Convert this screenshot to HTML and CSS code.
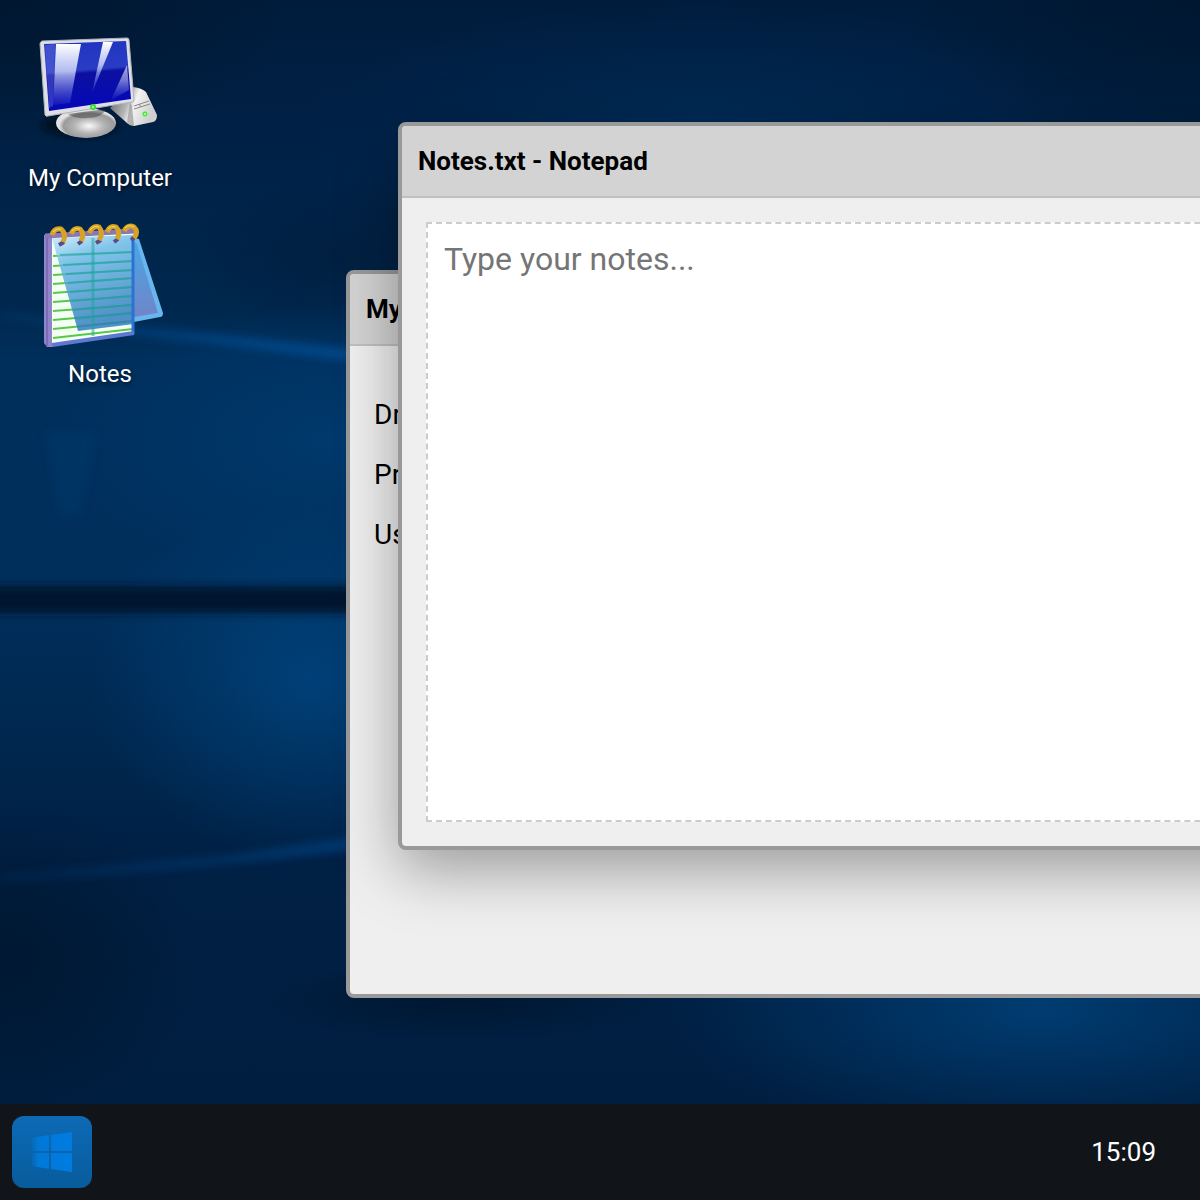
FILE: index.html
```html
<!DOCTYPE html>
<html lang="en">
<head>
    <meta charset="UTF-8">
    <meta name="viewport" content="width=device-width, initial-scale=1.0">
    <title>Desktop</title>
    <link rel="stylesheet" href="styles.css">
</head>
<body>
    <!-- Wallpaper -->
    <svg class="wallpaper" viewBox="0 0 1200 1200" preserveAspectRatio="none" aria-hidden="true">
        <defs>
            <linearGradient id="sky" x1="0" y1="0" x2="0" y2="1">
                <stop offset="0" stop-color="#001c3c"/>
                <stop offset="0.12" stop-color="#002146"/>
                <stop offset="0.26" stop-color="#00284f"/>
                <stop offset="0.3" stop-color="#002f5c"/>
                <stop offset="0.5" stop-color="#002f5c"/>
                <stop offset="0.6" stop-color="#002850"/>
                <stop offset="0.72" stop-color="#002044"/>
                <stop offset="1" stop-color="#001d3e"/>
            </linearGradient>
            <radialGradient id="glow">
                <stop offset="0" stop-color="#004a88" stop-opacity="0.85"/>
                <stop offset="1" stop-color="#004a88" stop-opacity="0"/>
            </radialGradient>
            <radialGradient id="dark">
                <stop offset="0" stop-color="#00142a" stop-opacity="0.7"/>
                <stop offset="1" stop-color="#00142a" stop-opacity="0"/>
            </radialGradient>
            <linearGradient id="beam" gradientUnits="userSpaceOnUse" x1="0" y1="0" x2="350" y2="0">
                <stop offset="0" stop-color="#01509a" stop-opacity="0.2"/>
                <stop offset="1" stop-color="#01509a" stop-opacity="0.8"/>
            </linearGradient>
            <filter id="soft" x="-20%" y="-50%" width="140%" height="200%"><feGaussianBlur stdDeviation="4"/></filter>
        </defs>
        <rect width="1200" height="1200" fill="url(#sky)"/>
        <ellipse cx="0" cy="0" rx="300" ry="160" fill="url(#dark)"/>
        <ellipse cx="1200" cy="0" rx="300" ry="160" fill="url(#dark)"/>
        <ellipse cx="0" cy="960" rx="200" ry="160" fill="url(#dark)"/>
        <ellipse cx="460" cy="1000" rx="200" ry="40" fill="url(#dark)"/>
        <ellipse cx="340" cy="260" rx="160" ry="80" fill="url(#dark)" opacity="0.5"/>
        <ellipse cx="700" cy="130" rx="400" ry="130" fill="url(#glow)" opacity="0.3"/>
        <ellipse cx="340" cy="440" rx="280" ry="140" fill="url(#glow)" opacity="0.45"/>
        <ellipse cx="310" cy="680" rx="220" ry="180" fill="url(#glow)" opacity="0.8"/>
        <ellipse cx="1040" cy="1010" rx="380" ry="130" fill="url(#glow)" opacity="0.8"/>
        <path d="M0 312 L150 328 L250 338 L350 350 L350 360 L230 346 L120 334 L0 318z" fill="url(#beam)" filter="url(#soft)"/>
        <path d="M0 882 L120 874 L270 860 L350 850 L350 838 L220 856 L0 874z" fill="url(#beam)" filter="url(#soft)" opacity="0.6"/>
        <path d="M46 432 H96 L80 514 H60z" fill="#003c6e" filter="url(#soft)" opacity="0.4"/>
        <rect x="-20" y="586" width="1240" height="27" fill="#00142e" filter="url(#soft)"/>
    </svg>

    <main class="desktop">
        <!-- Desktop icons -->
        <div class="icons">
            <button class="icon" type="button">
                <svg viewBox="0 0 128 128" aria-hidden="true">
                    <defs>
                        <linearGradient id="screen" x1="0" y1="0" x2="0.1" y2="1">
                            <stop offset="0" stop-color="#2034c0"/>
                            <stop offset="0.45" stop-color="#2a3cc4"/>
                            <stop offset="0.5" stop-color="#0c10a0"/>
                            <stop offset="1" stop-color="#0508b8"/>
                        </linearGradient>
                        <linearGradient id="shine" x1="0" y1="0" x2="0" y2="1">
                            <stop offset="0" stop-color="#fff"/>
                            <stop offset="0.45" stop-color="#e0e6ff" stop-opacity="0.75"/>
                            <stop offset="1" stop-color="#8090ff" stop-opacity="0.1"/>
                        </linearGradient>
                        <radialGradient id="stand" cx="0.55" cy="0.6">
                            <stop offset="0" stop-color="#fafafa"/>
                            <stop offset="0.5" stop-color="#b4b4b4"/>
                            <stop offset="0.85" stop-color="#9a9a9a"/>
                            <stop offset="1" stop-color="#e2e2e2"/>
                        </radialGradient>
                        <linearGradient id="tower" x1="0" y1="0" x2="1" y2="0.3">
                            <stop offset="0" stop-color="#5c5c5c"/>
                            <stop offset="0.45" stop-color="#b5b5b5"/>
                            <stop offset="0.6" stop-color="#f2f2f2"/>
                            <stop offset="1" stop-color="#cfcfcf"/>
                        </linearGradient>
                        <filter id="shade" x="-30%" y="-50%" width="160%" height="200%"><feGaussianBlur stdDeviation="3"/></filter>
                    </defs>
                    <ellipse cx="44" cy="101" rx="38" ry="12" fill="#000a18" opacity="0.7" filter="url(#shade)"/>
                    <path d="M74 84 L97 63 Q106 64 110 68 L121 91 Q121 97 117 98 L98 102 Q94 102 91 99z" fill="url(#tower)"/>
                    <path d="M94 78 L91 98 Q94 102 98 102 L96 82z" fill="#8b8b8b" opacity="0.6"/>
                    <path d="M98 82 L113 77 M98 85 L114 80 M103 80 L105 83" fill="none" stroke="#888" stroke-width="1"/>
                    <circle cx="109" cy="90" r="3" fill="#a8f7a0"/>
                    <circle cx="109" cy="90" r="2" fill="none" stroke="#2be02b" stroke-width="1"/>
                    <ellipse cx="50" cy="99" rx="30" ry="15" fill="url(#stand)"/>
                    <path d="M32 90 L70 85 Q66 94 52 94 Q38 95 32 90z" fill="#333" opacity="0.45"/>
                    <path d="M6 17 L91 14 Q93 14 93 16 L98 76 Q98 78 96 78 L12 92 Q10 93 9 91 L4 20 Q4 18 6 17z" fill="#dedfe6" stroke="#aeb0bb" stroke-width="1"/>
                    <path d="M8 20 L90 17 L95 75 L13 87z" fill="url(#screen)"/>
                    <path d="M9 21 L19 20 L17 82 L13 84z" fill="#6b78e0" opacity="0.4"/>
                    <path d="M20 20 H45 L34 79 L17 81z" fill="url(#shine)"/>
                    <path d="M67 18 H77 L56 69z" fill="url(#shine)"/>
                    <path d="M91 41 L93 66 L75 76z" fill="url(#shine)" opacity="0.65"/>
                    <circle cx="57" cy="83" r="3" fill="#35e030"/>
                    <circle cx="57" cy="83" r="1" fill="#c9ffc0"/>
                </svg>
                <span>My Computer</span>
            </button>
            <button class="icon" type="button">
                <svg viewBox="0 0 128 128" aria-hidden="true">
                    <defs>
                        <linearGradient id="sheet" x1="0" y1="0" x2="0.3" y2="1">
                            <stop offset="0" stop-color="#cfeafa"/>
                            <stop offset="0.3" stop-color="#68b8e8"/>
                            <stop offset="1" stop-color="#2c78bc"/>
                        </linearGradient>
                        <linearGradient id="flap" x1="0" y1="0" x2="0" y2="1">
                            <stop offset="0" stop-color="#4aa6e4"/>
                            <stop offset="1" stop-color="#7085c8"/>
                        </linearGradient>
                    </defs>
                    <path d="M98 18 L103 19 L127 93 Q127 97 124 97 L98 102z" fill="#69b6ee"/>
                    <path d="M98 22 L101 24 L122 93 L98 97z" fill="url(#flap)"/>
                    <path d="M8 15 L17 13 V127 H11 L8 123z" fill="#9184c8"/>
                    <path d="M11 16 V126" stroke="#6557a6" stroke-width="1"/>
                    <path d="M16 17 L98 13 V114 L16 125z" fill="#f4fff4"/>
                    <g stroke="#58c848" stroke-width="2">
                        <path d="M17 36 L97 32M17 46 L97 41M17 55 L97 50M17 64 L97 58M17 73 L97 67M17 82 L97 76M17 91 L97 85M17 100 L97 93M17 109 L97 101M17 118 L97 109"/>
                    </g>
                    <path d="M16 18 L98 15 V104 L42 111z" fill="url(#sheet)" opacity="0.82"/>
                    <g stroke="#1fa5a0" stroke-width="2" opacity="0.6">
                        <path d="M24 35 L97 32M27 45 L97 41M30 54 L97 50M32 63 L97 58M34 72 L97 67M36 81 L97 76M38 90 L97 85M40 99 L97 93"/>
                    </g>
                    <path d="M57 18 V116" stroke="#16a69b" stroke-width="3" opacity="0.5"/>
                    <path d="M97 16 V114" stroke="#2a72d4" stroke-width="3"/>
                    <path d="M16 125 L98 113" stroke="#5f78d2" stroke-width="4"/>
                    <path d="M9 16 L98 11" stroke="#8a76b4" stroke-width="5"/>
                    <g fill="none" stroke="#5b4a86" stroke-width="4">
                        <path d="M23 25 L28 22M42 24 L46 21M60 23 L65 20M78 22 L82 19M95 20 L99 17"/>
                    </g>
                    <g fill="none" stroke="#d6a324" stroke-width="5">
                        <path d="M16 15 Q18 8 25 9 Q31 14 27 22M35 14 Q38 7 44 9 Q49 14 45 21M53 13 Q57 5 63 7 Q68 13 63 20M71 12 Q74 5 80 7 Q85 12 81 19M88 11 Q92 4 98 7 Q103 12 98 18"/>
                    </g>
                    <g fill="none" stroke="#f9dc6c" stroke-width="1">
                        <path d="M17 12 Q20 8 25 9M36 11 Q39 7 44 9M54 10 Q58 5 63 7M72 9 Q75 5 80 7M89 8 Q93 4 98 7"/>
                    </g>
                </svg>
                <span>Notes</span>
            </button>
        </div>

        <!-- Windows -->
        <section class="window computer">
            <h2 class="title-bar">My Computer</h2>
            <div class="window-body">
                <ul class="folders">
                    <li>Drives</li>
                    <li>Programs</li>
                    <li>Users</li>
                </ul>
            </div>
        </section>

        <section class="window notepad">
            <h2 class="title-bar">Notes.txt - Notepad</h2>
            <div class="window-body">
                <textarea aria-label="Notes" placeholder="Type your notes..."></textarea>
            </div>
        </section>
    </main>

    <!-- Taskbar -->
    <footer class="taskbar">
        <button class="start" type="button" aria-label="Start">
            <svg viewBox="0 0 40 40" aria-hidden="true">
                <defs>
                    <linearGradient id="logo">
                        <stop offset="0" stop-color="#0078d4" stop-opacity="0.2"/>
                        <stop offset="0.15" stop-color="#0078d8"/>
                        <stop offset="1" stop-color="#007ce0"/>
                    </linearGradient>
                </defs>
                <path d="M0 6 L17 3 V19 H0zM19 3 L40 0 V19 H19zM0 21 H17 V37 L0 34zM19 21 H40 V40 L19 37z" fill="url(#logo)"/>
            </svg>
        </button>
        <time class="clock">15:09</time>
    </footer>
</body>
</html>
```

FILE: styles.css
```css
* {
    box-sizing: border-box;
}

body {
    margin: 0;
    height: 100vh;
    display: flex;
    flex-direction: column;
    overflow: hidden;
    font-family: Roboto, sans-serif;
    background: #001c3c;
}

button {
    border: none;
    background: none;
    font-family: inherit;
    cursor: pointer;
}

.wallpaper {
    position: absolute;
    inset: 0;
    width: 100%;
    height: 100%;
}

.desktop {
    position: relative;
    flex: 1;
    min-height: 0;
    overflow: hidden;
}

/* Desktop icons */
.icons {
    display: flex;
    flex-direction: column;
    gap: 24px;
    width: 200px;
    padding-top: 24px;
}

.icon {
    display: flex;
    flex-direction: column;
    align-items: center;
    gap: 8px;
    padding: 0;
    color: white;
    font-size: 24px;
    line-height: 36px;
    text-shadow: 0 2px 4px rgba(0, 0, 0, 0.6);
}

.icon svg {
    width: 128px;
    height: 128px;
}

/* Windows */
.window {
    position: absolute;
    width: 1000px;
    background: #efefef;
    border: 4px solid #999;
    border-radius: 8px;
    overflow: hidden;
}

.computer {
    left: 346px;
    top: 270px;
}

.notepad {
    left: 398px;
    top: 122px;
    box-shadow: 0 20px 60px rgba(0, 0, 0, 0.35);
}

.title-bar {
    margin: 0;
    padding: 16px;
    font-size: 26px;
    line-height: 38px;
    font-weight: bold;
    color: black;
    background: #d3d3d3;
    border-bottom: 2px solid #c0c0c0;
}

.window-body {
    height: 648px;
    padding: 24px;
}

.folders {
    margin: 0;
    padding: 15px 0;
    list-style: none;
    font-size: 28px;
    line-height: 60px;
}

textarea {
    display: block;
    width: 100%;
    height: 100%;
    padding: 16px;
    border: 2px dashed #ccc;
    background: white;
    font-family: inherit;
    font-size: 32px;
    line-height: 38px;
    resize: none;
    outline: none;
}

textarea::placeholder {
    color: #757575;
}

/* Taskbar */
.taskbar {
    position: relative;
    display: flex;
    justify-content: space-between;
    align-items: center;
    height: 96px;
    padding: 0 44px 0 12px;
    background: #111519;
}

.start {
    display: flex;
    justify-content: center;
    align-items: center;
    width: 80px;
    height: 72px;
    padding: 0;
    border-radius: 12px;
    background: linear-gradient(#0e6ab6, #075c9c);
}

.start svg {
    width: 40px;
    height: 40px;
}

.clock {
    color: white;
    font-size: 26px;
}
```
